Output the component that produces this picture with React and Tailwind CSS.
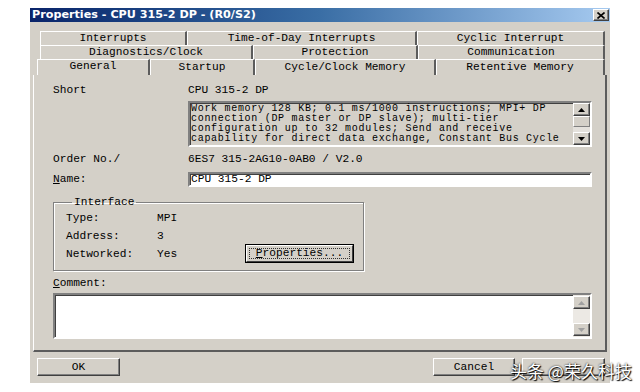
import React from "react";

const mono = "font-['Liberation_Mono',monospace] text-[11.2px] text-black";
const raised =
  "bg-[#d4d0c8] border border-t-white border-l-white border-r-[#404040] border-b-[#404040] shadow-[inset_-1px_-1px_#808080]";
const sunken =
  "border-2 border-t-[#808080] border-l-[#808080] border-r-white border-b-white shadow-[inset_1px_1px_#404040]";

function Tab({ label, w, selected }) {
  return (
    <div
      className={`h-full shrink-0 flex items-center justify-center border-t border-l border-white border-r-2 border-r-[#5c5c5c] ${
        selected ? "pb-[2px]" : ""
      }`}
      style={{ width: w }}
    >
      {label}
    </div>
  );
}

function ScrollBtn({ down, disabled }) {
  return (
    <div className={`w-[17px] h-[13px] flex items-center justify-center ${raised}`}>
      <svg width="7" height="4" viewBox="0 0 7 4">
        <path
          d={down ? "M0 0 H7 L3.5 4 Z" : "M0 4 H7 L3.5 0 Z"}
          fill={disabled ? "#a0a0a0" : "#000"}
        />
      </svg>
    </div>
  );
}

function Row({ label, children, className = "" }) {
  return (
    <div className={`flex items-center h-[12px] ${className}`}>
      <div className="w-[135px]">{label}</div>
      <div>{children}</div>
    </div>
  );
}

function IfRow({ label, value }) {
  return (
    <div className="flex items-center h-[12px]">
      <div className="w-[91px]">{label}</div>
      <div>{value}</div>
    </div>
  );
}

export default function App() {
  return (
    <div className="w-[640px] h-[392px] bg-white overflow-hidden pt-[8px] pl-[30px]">
      <div className={`relative w-[580px] h-[375px] bg-[#d4d0c8] flex flex-col ${mono}`}>
        {/* Title bar */}
        <div className="h-[14px] flex items-center justify-between pl-[2px] pr-[1px] bg-gradient-to-r from-[#0a246a] via-[#3a6ea5] to-[#a6caf0]">
          <span className="font-['DejaVu_Sans',sans-serif] font-bold text-[11.2px] text-white leading-none">
            Properties - CPU 315-2 DP - (R0/S2)
          </span>
          <div className={`w-[16px] h-[12px] flex items-center justify-center ${raised}`}>
            <svg width="8" height="7" viewBox="0 0 8 7">
              <path d="M0.5 0.5 L7.5 6.5 M7.5 0.5 L0.5 6.5" stroke="#000" strokeWidth="1.6" />
            </svg>
          </div>
        </div>

        {/* Tabs */}
        <div className="mt-[9px] h-[14px] pl-[10px] flex">
          <Tab label="Interrupts" w={147} />
          <Tab label="Time-of-Day Interrupts" w={230} />
          <Tab label="Cyclic Interrupt" w={188} />
        </div>
        <div className="h-[14px] pl-[10px] flex">
          <Tab label="Diagnostics/Clock" w={213} />
          <Tab label="Protection" w={165} />
          <Tab label="Communication" w={187} />
        </div>
        <div className="h-[16px] pl-[7px] flex">
          <Tab label="General" w={113} selected />
          <Tab label="Startup" w={105} />
          <Tab label="Cycle/Clock Memory" w={181} />
          <Tab label="Retentive Memory" w={169} />
        </div>

        {/* Panel */}
        <div className="ml-[3px] w-[574px] h-[277px] border-l border-white border-r-2 border-b-2 border-r-[#5c5c5c] border-b-[#5c5c5c] pl-[19px] pr-[13px] pt-[9px] flex flex-col">
          <Row label="Short">CPU 315-2 DP</Row>
          <div className={`mt-[5px] ml-[135px] h-[46px] flex ${sunken}`}>
            <div className="flex-1 text-[10px] tracking-[0.7px] leading-[10px] pt-[1px] pl-[1px] whitespace-nowrap overflow-hidden">
              <div>Work memory 128 KB; 0.1 ms/1000 instructions; MPI+ DP</div>
              <div>connection (DP master or DP slave); multi-tier</div>
              <div>configuration up to 32 modules; Send and receive</div>
              <div>capability for direct data exchange, Constant Bus Cycle</div>
            </div>
            <div className="w-[17px] flex flex-col">
              <ScrollBtn />
              <div className="h-[11px] border border-t-white border-l-white border-r-[#808080] border-b-[#808080]" />
              <div className="flex-1 bg-[#e4e1dc]" />
              <ScrollBtn down />
            </div>
          </div>
          <Row label="Order No./" className="mt-[6px]">
            6ES7 315-2AG10-0AB0 / V2.0
          </Row>
          <div className="mt-[7px] flex items-center h-[14px]">
            <div className="w-[135px]">
              <span className="underline">N</span>ame:
            </div>
            <div className={`flex-1 h-[15px] bg-white flex items-center pl-[1px] ${sunken}`}>
              CPU 315-2 DP
            </div>
          </div>

          {/* Interface group */}
          <fieldset className="mt-[10px] w-[311px] h-[75px] border border-[#808080] shadow-[1px_1px_white,inset_1px_1px_white] pl-[12px] pr-[9px] pb-[4px]">
            <legend className="ml-[6px] px-[2px] leading-[12px]">Interface</legend>
            <div className="flex items-end justify-between">
              <div className="flex flex-col gap-[6px] pt-[4px]">
                <IfRow label="Type:" value="MPI" />
                <IfRow label="Address:" value="3" />
                <IfRow label="Networked:" value="Yes" />
              </div>
              <div className="w-[109px] h-[19px] border border-black bg-[#d4d0c8] mb-[-3px]">
                <div className="h-full border border-t-white border-l-white border-r-[#404040] border-b-[#404040] p-[2px]">
                  <div className="h-full border border-dotted border-[#333] flex items-center justify-center">
                    <span>
                      <span className="underline">P</span>roperties...
                    </span>
                  </div>
                </div>
              </div>
            </div>
          </fieldset>

          <div className="mt-[6px] h-[12px] flex items-center">
            <span className="underline">C</span>omment:
          </div>
          <div className={`mt-[4px] h-[46px] bg-white flex justify-end ${sunken}`}>
            <div className="w-[17px] flex flex-col justify-between py-[1px] bg-[#ece9e4]">
              <ScrollBtn disabled />
              <ScrollBtn down disabled />
            </div>
          </div>
        </div>

        {/* Buttons */}
        <div className="mt-[6px] flex h-[18px]">
          <div className={`ml-[7px] w-[83px] h-full flex items-center justify-center ${raised}`}>OK</div>
          <div className={`ml-[313px] w-[82px] h-full flex items-center justify-center ${raised}`}>Cancel</div>
          <div className={`ml-[7px] w-[83px] h-full ${raised}`} />
        </div>

        {/* Watermark */}
        <div className="absolute left-[480px] top-[354px] font-['Noto_Sans_CJK_SC',sans-serif] text-[17px] leading-none text-white [text-shadow:0_0_2px_#000,1px_1px_1px_#000] whitespace-nowrap">
          头条 @荣久科技
        </div>
      </div>
    </div>
  );
}
